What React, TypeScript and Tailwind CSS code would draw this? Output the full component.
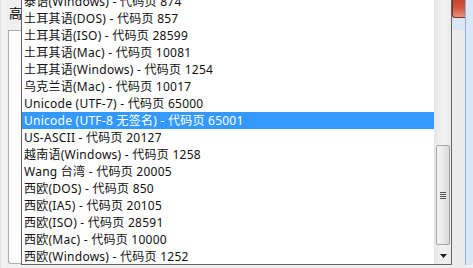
const rows = [
  "泰语(Windows) - 代码页 874",
  "土耳其语(DOS) - 代码页 857",
  "土耳其语(ISO) - 代码页 28599",
  "土耳其语(Mac) - 代码页 10081",
  "土耳其语(Windows) - 代码页 1254",
  "乌克兰语(Mac) - 代码页 10017",
  "Unicode (UTF-7) - 代码页 65000",
  "Unicode (UTF-8 无签名) - 代码页 65001",
  "US-ASCII - 代码页 20127",
  "越南语(Windows) - 代码页 1258",
  "Wang 台湾 - 代码页 20005",
  "西欧(DOS) - 代码页 850",
  "西欧(IA5) - 代码页 20105",
  "西欧(ISO) - 代码页 28591",
  "西欧(Mac) - 代码页 10000",
  "西欧(Windows) - 代码页 1252",
]

const selected = 7

const font = { fontFamily: '"Noto Sans", "Noto Sans CJK SC", sans-serif' }

const App = () => {
  return (
    <div className="w-[473px] h-[268px] overflow-hidden flex bg-[#f0f0f0]" style={font}>
      {/* dialog behind, left side */}
      <div className="w-[21px] h-full flex flex-col pl-[7px] border-l border-[#d9e1ea]">
        <span className="ml-[1px] pt-[5px] text-[13px] leading-[16px] text-black">高</span>
        <div className="mt-[9px] mb-[4px] flex-1 border-l border-t border-b border-[#a9acb2] rounded-bl-[3px] bg-[#fdfdfd]" />
      </div>

      {/* dropdown list */}
      <div className="w-[431px] h-[265px] flex bg-white border-l border-r border-b border-[#646464]">
        <div className="flex-1 overflow-hidden">
          <div className="-mt-[7px] flex flex-col">
            {rows.map((r, i) => (
              <div
                key={r}
                className={
                  i === selected
                    ? "h-[17px] pl-[2px] text-[12px] leading-[17px] tracking-[0.25px] whitespace-nowrap bg-[#3399ff] text-white"
                    : "h-[17px] pl-[2px] text-[12px] leading-[17px] tracking-[0.25px] whitespace-nowrap text-[#111]"
                }
              >
                {r}
              </div>
            ))}
          </div>
        </div>

        {/* scrollbar */}
        <div className="w-[17px] h-full flex flex-col bg-gradient-to-r from-[#e8e8e8] via-[#f2f2f2] to-[#ebebeb] border-l border-[#e2e2e2]">
          <div className="flex-1" />
          <div className="h-[100px] mx-[1px] rounded-[2px] border border-[#a8a8a8] bg-gradient-to-r from-[#f4f4f4] via-[#e9e9e9] to-[#dadada] flex items-center justify-center">
            <div className="flex flex-col gap-[1px]">
              <div className="w-[6px] h-[1px] bg-[#555]" />
              <div className="w-[6px] h-[1px] bg-[#555]" />
              <div className="w-[6px] h-[1px] bg-[#555]" />
              <div className="w-[6px] h-[1px] bg-[#555]" />
            </div>
          </div>
          <div className="h-[2px]" />
          <div className="h-[17px] flex items-center justify-center">
            <svg width="7" height="4" viewBox="0 0 7 4">
              <path d="M0 0 H7 L3.5 4 Z" fill="#1e1e1e" />
            </svg>
          </div>
        </div>
      </div>

      {/* dialog behind, right side */}
      <div className="flex-1 h-full flex">
        <div className="w-[13px] flex flex-col">
          <div className="h-[18px] rounded-bl-[3px] border-l border-b border-[#80301f] bg-gradient-to-b from-[#c9442c] via-[#d25a42] to-[#e69180]" />
          <div className="h-[12px] bg-[#dbe7f4]" />
          <div className="flex-1 bg-[#ececec]" />
        </div>
        <div className="flex-1 border-l border-[#8fb3dc] bg-[#d9e7f6] rounded-br-[4px] mb-[3px]" />
      </div>
    </div>
  )
}

export default App
